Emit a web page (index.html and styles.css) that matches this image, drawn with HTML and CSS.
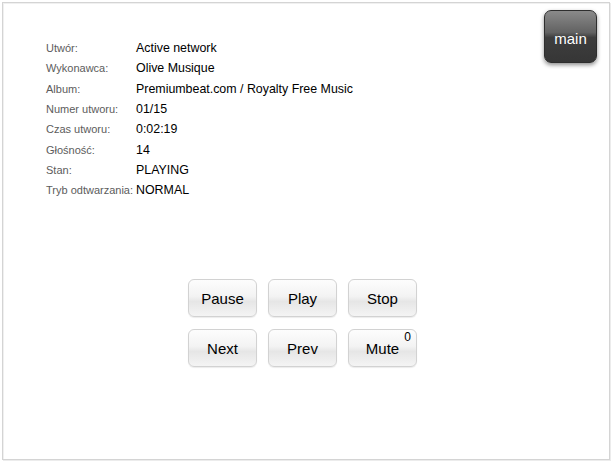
FILE: index.html
```html
<!DOCTYPE html>
<html lang="pl">
<head>
  <meta charset="UTF-8" />
  <title>Odtwarzacz</title>
  <link rel="stylesheet" href="styles.css">
</head>
<body>
  <div class="frame">
    <div class="top">
      <table class="info">
        <tr><td class="label">Utwór:</td><td class="value">Active network</td></tr>
        <tr><td class="label">Wykonawca:</td><td class="value">Olive Musique</td></tr>
        <tr><td class="label">Album:</td><td class="value">Premiumbeat.com / Royalty Free Music</td></tr>
        <tr><td class="label">Numer utworu:</td><td class="value">01/15</td></tr>
        <tr><td class="label">Czas utworu:</td><td class="value">0:02:19</td></tr>
        <tr><td class="label">Głośność:</td><td class="value">14</td></tr>
        <tr><td class="label">Stan:</td><td class="value">PLAYING</td></tr>
        <tr><td class="label">Tryb odtwarzania:</td><td class="value">NORMAL</td></tr>
      </table>
      <a class="button-main" href="#">main</a>
    </div>

    <div class="controls">
      <a class="btn" href="#">Pause</a>
      <a class="btn" href="#">Play</a>
      <a class="btn" href="#">Stop</a>
      <a class="btn" href="#">Next</a>
      <a class="btn" href="#">Prev</a>
      <a class="btn btn-mute" href="#">Mute<span class="count">0</span></a>
    </div>
  </div>
</body>
</html>
```

FILE: styles.css
```css
* {
  margin: 0;
  padding: 0;
  box-sizing: border-box;
}

body {
  font-family: 'Liberation Sans', Arial, sans-serif;
  background: #fff;
  color: #000;
  padding: 2px 2px 2px 2px;
}

/* Ramka */
.frame {
  width: 608px;
  height: 458px;
  border: 1px solid #d4d4d4;
  box-shadow: inset 1px 1px 0 #f0f0f0, 1px 1px 0 #ececec;
  padding: 5px 12px 0 0;
}

.top {
  display: flex;
  justify-content: space-between;
  align-items: flex-start;
}

/* Informacje o utworze */
.info {
  border-collapse: collapse;
  margin: 30px 0 0 43px;
}

.info td {
  height: 20.3px;
  padding: 0;
  vertical-align: middle;
}

.info .label {
  font-size: 11px;
  color: #5c5c5c;
  padding-right: 3px;
}

.info .value {
  font-size: 12.4px;
  color: #000;
}

/* Przycisk main */
.button-main {
  display: flex;
  align-items: center;
  justify-content: center;
  width: 53px;
  height: 53px;
  margin-top: 2px;
  padding-top: 4px;
  border: 1px solid #2e2e2e;
  border-radius: 7px;
  background: linear-gradient(#8a8a8a 0%, #626262 42%, #3e3e3e 52%, #363636 100%);
  box-shadow: 0 2px 4px rgba(0, 0, 0, 0.45);
  color: #fff;
  font-size: 15px;
  text-decoration: none;
}

/* Sterowanie */
.controls {
  display: grid;
  grid-template-columns: repeat(3, 69px);
  grid-auto-rows: 38px;
  column-gap: 11px;
  row-gap: 12px;
  width: max-content;
  margin: 79px 0 0 185px;
}

.btn {
  position: relative;
  display: flex;
  align-items: center;
  justify-content: center;
  border: 1px solid #d2d2d2;
  border-radius: 6px;
  background: linear-gradient(#fdfdfd 0%, #f3f3f3 45%, #e6e6e6 60%, #f4f4f4 100%);
  box-shadow: 0 1px 1px rgba(0, 0, 0, 0.08);
  color: #000;
  font-size: 15px;
  text-decoration: none;
}

.btn-mute .count {
  position: absolute;
  top: 0;
  right: 5px;
  font-size: 12px;
}
```
